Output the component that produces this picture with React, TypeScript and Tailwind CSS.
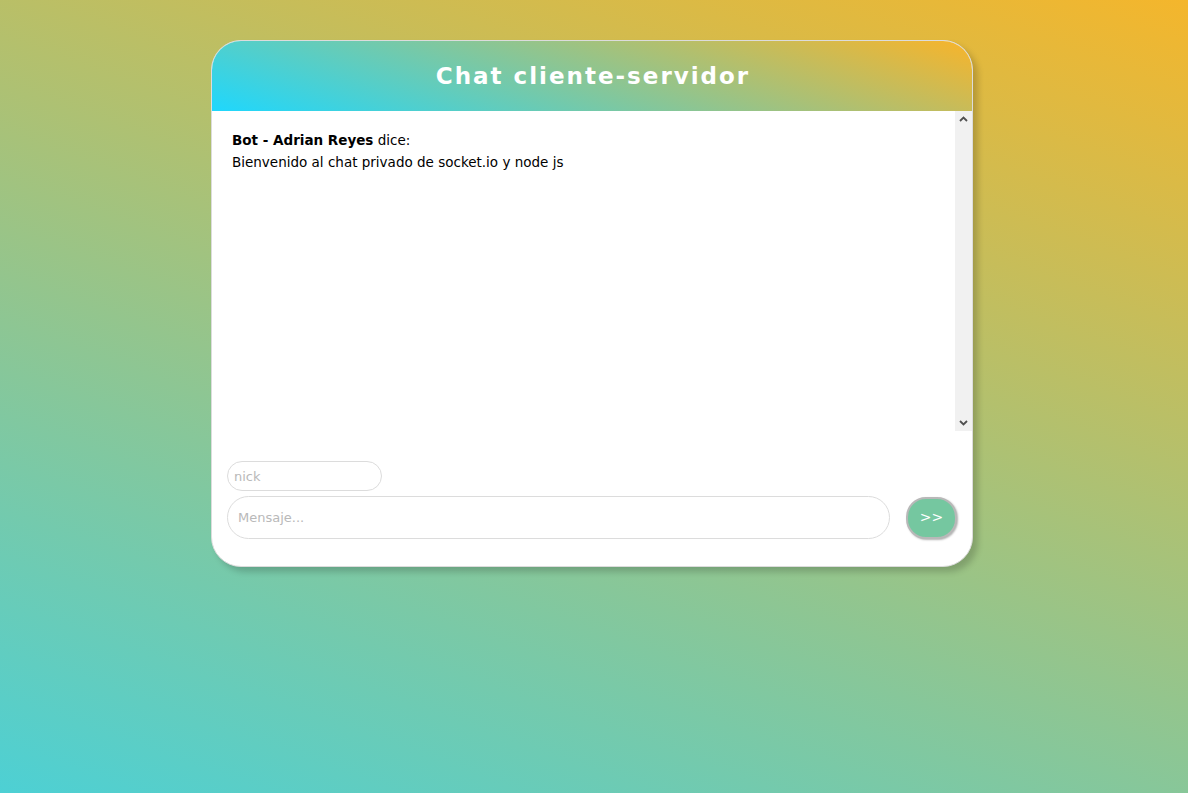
import React, { useState } from 'react';

type Msg = { nick: string; text: string };

const Arrow = ({ up }: { up?: boolean }) => (
  <svg width="9" height="6" viewBox="0 0 9 6" className="text-[#505050]">
    <path d={up ? 'M1 5 L4.5 1.5 L8 5' : 'M1 1 L4.5 4.5 L8 1'} fill="none" stroke="currentColor" strokeWidth="1.8" />
  </svg>
);

export default function App() {
  const [messages] = useState<Msg[]>([
    { nick: 'Bot - Adrian Reyes', text: 'Bienvenido al chat privado de socket.io y node js' },
  ]);
  const [nick, setNick] = useState('');
  const [text, setText] = useState('');

  return (
    <div className="min-h-[793px] w-full bg-[linear-gradient(20deg,#4dd0d4,#f4b62c)] pr-[4px] pt-10 font-['DejaVu_Sans',sans-serif]">
      <div className="mx-auto w-[762px] overflow-hidden rounded-[30px] border border-[#dcdcdc] bg-white shadow-[5px_5px_6px_rgba(0,0,0,0.18)]">
        {/* Header */}
        <div className="flex h-[70px] items-center justify-center bg-[linear-gradient(18deg,#1fd7fd,#f8b42a)]">
          <h1 className="pl-[2px] text-[23px] font-bold tracking-[2px] text-white">Chat cliente-servidor</h1>
        </div>

        {/* Messages */}
        <div className="flex h-[320px]">
          <div className="flex-1 overflow-hidden px-5 pt-[18px] text-[13.5px] leading-[22px] text-black">
            {messages.map((m, i) => (
              <div key={i}>
                <div>
                  <strong className="font-bold">{m.nick}</strong> dice:
                </div>
                <div>{m.text}</div>
              </div>
            ))}
          </div>
          <div className="flex w-[17px] flex-col items-center justify-between bg-[#f1f1f1] py-[5px]">
            <Arrow up />
            <Arrow />
          </div>
        </div>

        {/* Form */}
        <div className="flex flex-col gap-[5px] px-[15px] pb-[27px] pt-[30px]">
          <input
            value={nick}
            onChange={e => setNick(e.target.value)}
            placeholder="nick"
            className="h-[30px] w-[155px] rounded-full border border-[#dcdcdc] px-[6px] text-[13px] text-gray-700 outline-none placeholder:text-[#b9b9b9]"
          />
          <div className="flex items-center gap-4">
            <input
              value={text}
              onChange={e => setText(e.target.value)}
              placeholder="Mensaje..."
              className="h-[43px] flex-1 rounded-full border border-[#dcdcdc] px-[10px] text-[13px] text-gray-700 outline-none placeholder:text-[#b9b9b9]"
            />
            <button className="h-[42px] w-[51px] rounded-[20px] border-2 border-[#b8b8b8] bg-[#75c7a0] text-[14px] text-white shadow-[1px_1px_2px_rgba(0,0,0,0.3)]">
              &gt;&gt;
            </button>
          </div>
        </div>
      </div>
    </div>
  );
}
